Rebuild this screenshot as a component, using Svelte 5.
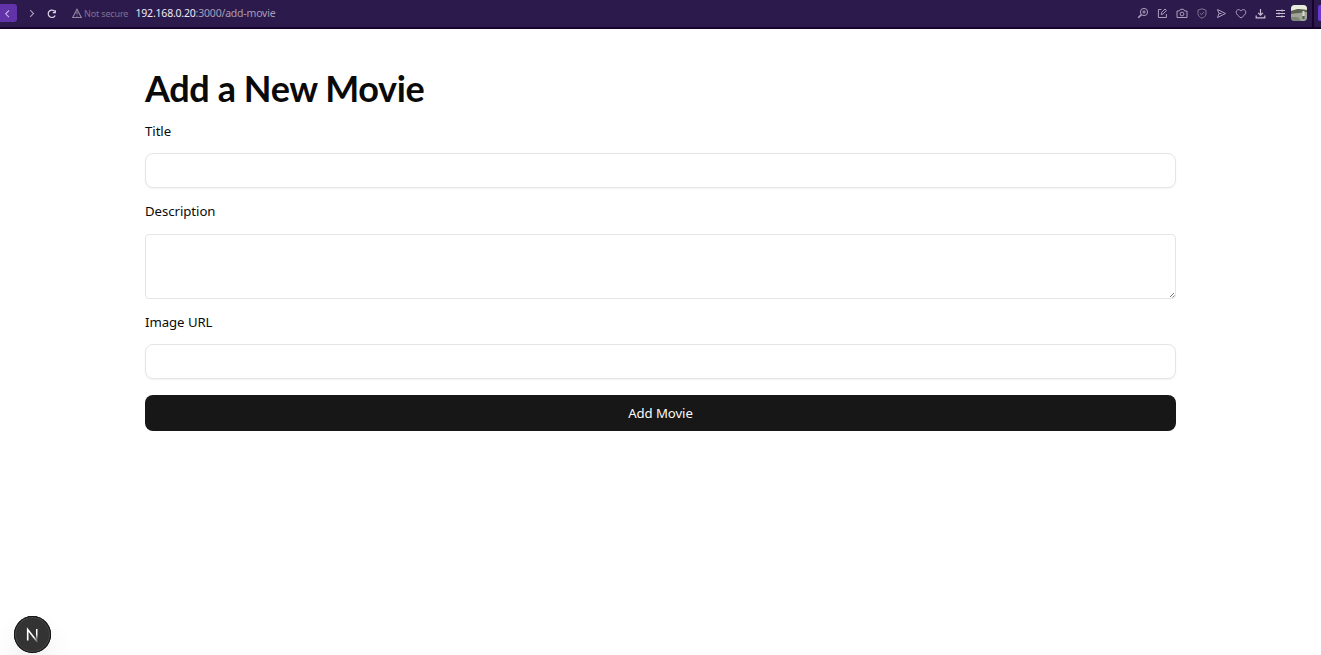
<script>
  let title = $state('');
  let description = $state('');
  let imageUrl = $state('');
</script>

<div class="page">
  <header class="bar">
    <button class="back" aria-label="Back"><svg width="17" height="18" viewBox="0 0 17 18"><path d="M9 6.500 5.700 9.800l3.300 3.300" /></svg></button>
    <svg class="forward" width="14" height="14" viewBox="0 0 14 14"><path d="m5.200 4.200 3.300 3.300-3.300 3.300" /></svg>
    <svg class="reload" width="14" height="14" viewBox="0 0 14 14"><path d="M9.800 5.500A3.700 3.700 0 1 0 10.200 9.500M10.300 4.200v2.500H7.800" /></svg>
    <svg class="warn" width="12" height="12" viewBox="0 0 12 12"><path d="M6 2.200 10.300 10.500H1.700zM6 5v2.600M6 8.700v.7" /></svg>
    <span class="insecure">Not secure</span>
    <span class="address"><b>192.168.0.20</b>:3000/add-movie</span>
    <div class="tools">
      <svg viewBox="0 0 14 14"><circle cx="8" cy="6" r="3.600" /><path stroke-width="1.500" d="M5.400 8.600 2.200 11.800" /><path d="M8 4.300v3.400M6.300 6h3.400" /></svg>
      <svg viewBox="0 0 14 14"><path d="M6.400 3.500H3.400v8h8V8M6.200 8.500l.4-2.100L10 3l1.500 1.500-3.400 3.400z" /></svg>
      <svg viewBox="0 0 14 14"><path d="M2 5h2.300l1.200-1.700h3L9.700 5H12v6.500H2z" /><circle cx="7" cy="8" r="1.900" /></svg>
      <svg class="dim" viewBox="0 0 14 14"><path d="M7 2.800 11 4.100v3.500c0 2.300-1.700 3.700-4 4.600-2.300-.9-4-2.300-4-4.600V4.100zM5.100 7.400l1.400 1.300 2.500-2.600" /></svg>
      <svg viewBox="0 0 14 14"><path d="m3.500 3.500 8 4-8 4 1.500-4zM5 7.500h2.500" /></svg>
      <svg viewBox="0 0 14 14"><path d="M7 12C4.500 10.100 2.200 8.400 2.200 6.100 2.200 3.300 5.700 2.700 7 5.100 8.300 2.700 11.800 3.300 11.800 6.100 11.800 8.400 9.500 10.100 7 12z" /></svg>
      <svg class="bright" viewBox="0 0 14 14"><path d="M7.500 3v6M5.100 6.800 7.500 9.200l2.400-2.400M3.200 9.500v2.300h8.600V9.500" /></svg>
      <svg class="bright" viewBox="0 0 14 14"><path d="M3 4.500h9M3 7.500h9M3 10.500h9M9 3.500v2M6 6.500v2M9 9.500v2" /></svg>
    </div>
    <svg class="avatar" width="16" height="16" viewBox="0 0 16 16">
      <rect width="16" height="16" fill="#8d9186" /><path fill="#e9eadb" d="M0 0h16v5L7 4 0 6z" /><path fill="#59614f" d="m0 6 7-2 9 1v3L0 9z" /><path fill="#a0a598" d="M0 9 16 7v9H0z" /><path fill="#7f8878" d="M0 12h7l3 4H0z" /><path fill="#ddd9d4" d="M11.500 6h2v5h-2z" /><path fill="#4b5a5d" d="M11.500 11h2v3h-2z" />
    </svg>
    <div class="panel"><i></i></div>
  </header>

  <main>
    <h1>Add a New Movie</h1>
    <form onsubmit={(e) => e.preventDefault()}>
      <label for="title">Title</label>
      <input id="title" bind:value={title} />
      <label for="description">Description</label>
      <div class="area">
        <textarea id="description" bind:value={description}></textarea>
        <svg class="grip" width="6" height="6" viewBox="0 0 6 6"><path d="M1 5l4-4M3.500 5.500l2-2" /></svg>
      </div>
      <label for="image">Image URL</label>
      <input id="image" bind:value={imageUrl} />
      <button class="submit">Add Movie</button>
    </form>
  </main>

  <div class="badge">
    <svg width="37" height="37" viewBox="0 0 37 37">
      <defs>
        <linearGradient id="stem" x1="0" y1="0" x2="0" y2="1"><stop offset=".45" stop-color="#fff" /><stop offset="1" stop-color="#fff" stop-opacity="0" /></linearGradient>
        <linearGradient id="diag" x1="0" y1="0" x2="1" y2="1"><stop offset=".6" stop-color="#fff" /><stop offset="1" stop-color="#fff" stop-opacity=".15" /></linearGradient>
      </defs>
      <path d="M13.700 24.500v-11l9.800 12.500" fill="none" stroke="url(#diag)" stroke-width="1.600" />
      <rect x="22" y="13" width="1.500" height="11.500" fill="url(#stem)" />
    </svg>
  </div>
</div>

<style>
  :global(body) { margin: 0; background: #fff; overflow: hidden; }
  .page { position: relative; height: 655px; font-family: "Noto Sans", sans-serif; color: #0a0a0a; }
  .bar { box-sizing: border-box; height: 29px; padding-bottom: 1px; display: flex; align-items: center; background: #2c1a4d; border-bottom: 2px solid #17042c; overflow: hidden; }
  svg { flex: none; fill: none; stroke: #aa9fbc; stroke-width: 1.1; }
  .back { width: 17px; height: 18px; padding: 0; border: 0; border-radius: 0 3px 3px 0; background: #6132a8; display: flex; }
  .back svg { stroke: #c8b6e5; }
  .forward { margin-left: 8px; }
  .reload { margin-left: 5.500px; stroke: #ded8e7; stroke-width: 1.2; }
  .warn { margin-left: 12.500px; stroke: #93869f; }
  .insecure { margin-left: 1px; width: 51.500px; font-size: 9px; letter-spacing: -.15px; color: #80718f; white-space: nowrap; }
  .address { font-size: 10.500px; color: #a89db8; white-space: nowrap; letter-spacing: -.2px; }
  .address b { color: #eeeaf2; font-weight: 400; }
  .tools { margin-left: auto; display: flex; gap: 5.600px; }
  .tools svg { width: 14px; height: 14px; stroke-width: 1; }
  .tools .dim { stroke: #81728f; }
  .tools .bright { stroke: #c9c0d4; stroke-width: 1.2; }
  .avatar { margin-left: 4px; border-radius: 4px; stroke: none; }
  .panel { box-sizing: border-box; width: 9px; height: 27px; margin-left: 5px; border-left: 2px solid #17042c; display: flex; align-items: center; justify-content: flex-end; }
  .panel i { width: 3px; height: 16px; background: #6b38d0; border-radius: 2px 0 0 2px; }
  main { width: 1031px; margin-left: 145px; padding-top: 39px; }
  h1 { margin: 0; height: 40px; line-height: 40px; font-family: Lato, sans-serif; font-size: 36px; font-weight: 700; letter-spacing: -.4px; white-space: nowrap; }
  form { display: flex; flex-direction: column; padding-top: 11px; }
  label { align-self: flex-start; height: 24px; line-height: 24px; font-size: 13.200px; letter-spacing: -.05px; margin-bottom: 10px; }
  input { box-sizing: border-box; width: 100%; height: 35px; margin: 0 0 11px; padding: 4px 12px; border: 1px solid #e5e5e5; border-radius: 8px; box-shadow: 0 1px 2px #0000000d; outline: none; font: inherit; }
  .area { position: relative; height: 65px; margin: 1px 0 11px; }
  textarea { box-sizing: border-box; width: 100%; height: 65px; margin: 0; border: 1px solid #e5e5e5; border-radius: 4px; outline: none; font: inherit; display: block; resize: none; }
  .grip { position: absolute; right: 1px; bottom: 1px; stroke: #555; stroke-width: .8; }
  .submit { height: 36px; margin-top: 5px; padding: 0; border: 0; border-radius: 8px; background: #171717; color: #fafafa; font: 13.200px/36px "Noto Sans", sans-serif; letter-spacing: -.08px; }
  .badge { position: absolute; left: 14px; top: 616px; width: 37px; height: 37px; box-sizing: border-box; border-radius: 50%; background: #333; box-shadow: inset 0 0 0 1px #111, inset 0 0 0 2px #484848, 0 16px 32px -8px #0000003d; }
  .badge svg { display: block; stroke: none; }
</style>
